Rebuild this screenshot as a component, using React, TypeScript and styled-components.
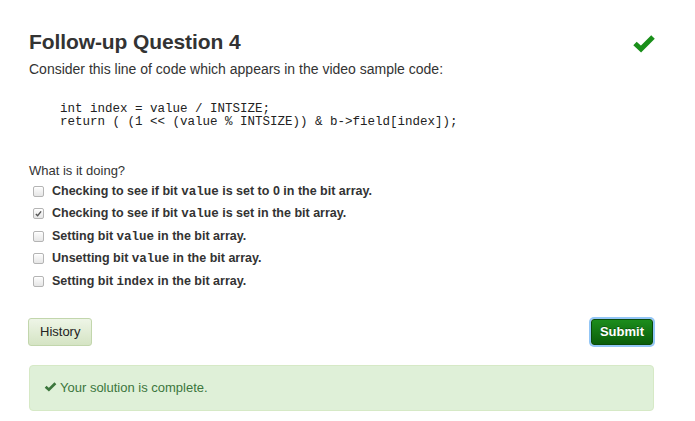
import React from "react";
import styled, {createGlobalStyle} from "styled-components";

const Global = createGlobalStyle`
    body {
        margin: 0;
        background: #fff;
        font-family: "Liberation Sans", Arial, sans-serif;
        color: #333;
    }
`

const Page = styled.div`
    padding: 30px 41px 10px 29px;
`

const Header = styled.div`
    display: flex;
    align-items: flex-start;
    justify-content: space-between;
`

const Title = styled.h3`
    margin: 0;
    font-size: 21px;
    line-height: 24px;
    font-weight: bold;
    color: #333;
    letter-spacing: -0.1px;
`

const BigCheck = styled.svg`
    width: 24px;
    height: 20px;
    margin-top: 3px;
    margin-right: -2px;
`

const Lead = styled.p`
    margin: 6px 0 0 0;
    font-size: 14px;
    line-height: 18px;
`

const Code = styled.pre`
    margin: 25px 0 0 31px;
    font-family: "Liberation Mono", "Courier New", monospace;
    font-size: 12.5px;
    line-height: 13px;
    color: #222;
`

const Prompt = styled.p`
    margin: 33px 0 0 0;
    font-size: 13px;
    line-height: 18px;
`

const Options = styled.div`
    display: flex;
    flex-direction: column;
`

const Option = styled.label`
    display: flex;
    align-items: center;
    height: 22.5px;
    padding-left: 4px;
    font-size: 12.5px;
    font-weight: bold;
    color: #333;
`

const Box = styled.span`
    display: inline-flex;
    align-items: center;
    justify-content: center;
    width: 9px;
    height: 9px;
    border: 1px solid #b4b4b4;
    border-radius: 2px;
    background: linear-gradient(#fdfdfd, #e6e6e6);
    margin-right: 8px;
    box-shadow: inset 0 1px 0 #fff;
`

const Mono = styled.code`
    font-family: "Liberation Mono", "Courier New", monospace;
    font-size: 12.5px;
    font-weight: bold;
`

const Actions = styled.div`
    display: flex;
    justify-content: space-between;
    align-items: center;
    margin-top: 25px;
`

const Button = styled.button<{ $primary?: boolean }>`
    font-family: "Liberation Sans", Arial, sans-serif;
    font-size: 13px;
    height: ${p => p.$primary ? '26px' : '28px'};
    padding: 0 ${p => p.$primary ? '8px' : '11px'};
    border-radius: 3px;
    cursor: pointer;
    ${p => p.$primary ? `
        margin-right: 1px;
        color: #fff;
        font-weight: bold;
        background: linear-gradient(#1c8d1c, #0b5e0b);
        border: 1px solid #0a4a0a;
        box-shadow: 0 0 0 2px #93c6f6;
        text-shadow: 0 -1px 0 rgba(0,0,0,0.3);
    ` : `
        margin-left: -1px;
        color: #222;
        background: linear-gradient(#eef5e7, #d5e4c4);
        border: 1px solid #c2d6ac;
    `}
`

const Alert = styled.div`
    display: flex;
    align-items: center;
    gap: 3px;
    margin-top: 19px;
    height: 44px;
    padding: 0 14px;
    background: #dff0d8;
    border: 1px solid #d6e9c6;
    border-radius: 4px;
    color: #3c763d;
    font-size: 13px;
`

const SmallCheck = styled.svg`
    width: 13px;
    height: 11px;
    margin-bottom: 2px;
`

const TickMark = ({color, width}: { color: string, width: number }) => (
    <path d="M3 10.5 L9 16 L21 4" fill="none" stroke={color} strokeWidth={width} strokeLinejoin="miter"/>
)

const options = [
    <>Checking to see if bit <Mono>value</Mono> is set to 0 in the bit array.</>,
    <>Checking to see if bit <Mono>value</Mono> is set in the bit array.</>,
    <>Setting bit <Mono>value</Mono> in the bit array.</>,
    <>Unsetting bit <Mono>value</Mono> in the bit array.</>,
    <>Setting bit <Mono>index</Mono> in the bit array.</>,
]

export default function App() {
    return (
        <Page>
            <Global/>
            <Header>
                <Title>Follow-up Question 4</Title>
                <BigCheck viewBox="0 0 24 20">
                    <TickMark color="#1a8f1a" width={5}/>
                </BigCheck>
            </Header>
            <Lead>Consider this line of code which appears in the video sample code:</Lead>
            <Code>{`int index = value / INTSIZE;
return ( (1 << (value % INTSIZE)) & b->field[index]);`}</Code>
            <Prompt>What is it doing?</Prompt>
            <Options>
                {options.map((o, i) => (
                    <Option key={i}>
                        <Box>
                            {i === 1 && (
                                <svg width="7" height="7" viewBox="0 0 8 8">
                                    <path d="M1 4.5 L3 6.5 L7 1.5" fill="none" stroke="#555" strokeWidth="1.6"/>
                                </svg>
                            )}
                        </Box>
                        <span>{o}</span>
                    </Option>
                ))}
            </Options>
            <Actions>
                <Button>History</Button>
                <Button $primary>Submit</Button>
            </Actions>
            <Alert>
                <SmallCheck viewBox="0 0 24 20">
                    <TickMark color="#3c763d" width={5}/>
                </SmallCheck>
                <span>Your solution is complete.</span>
            </Alert>
        </Page>
    )
}
